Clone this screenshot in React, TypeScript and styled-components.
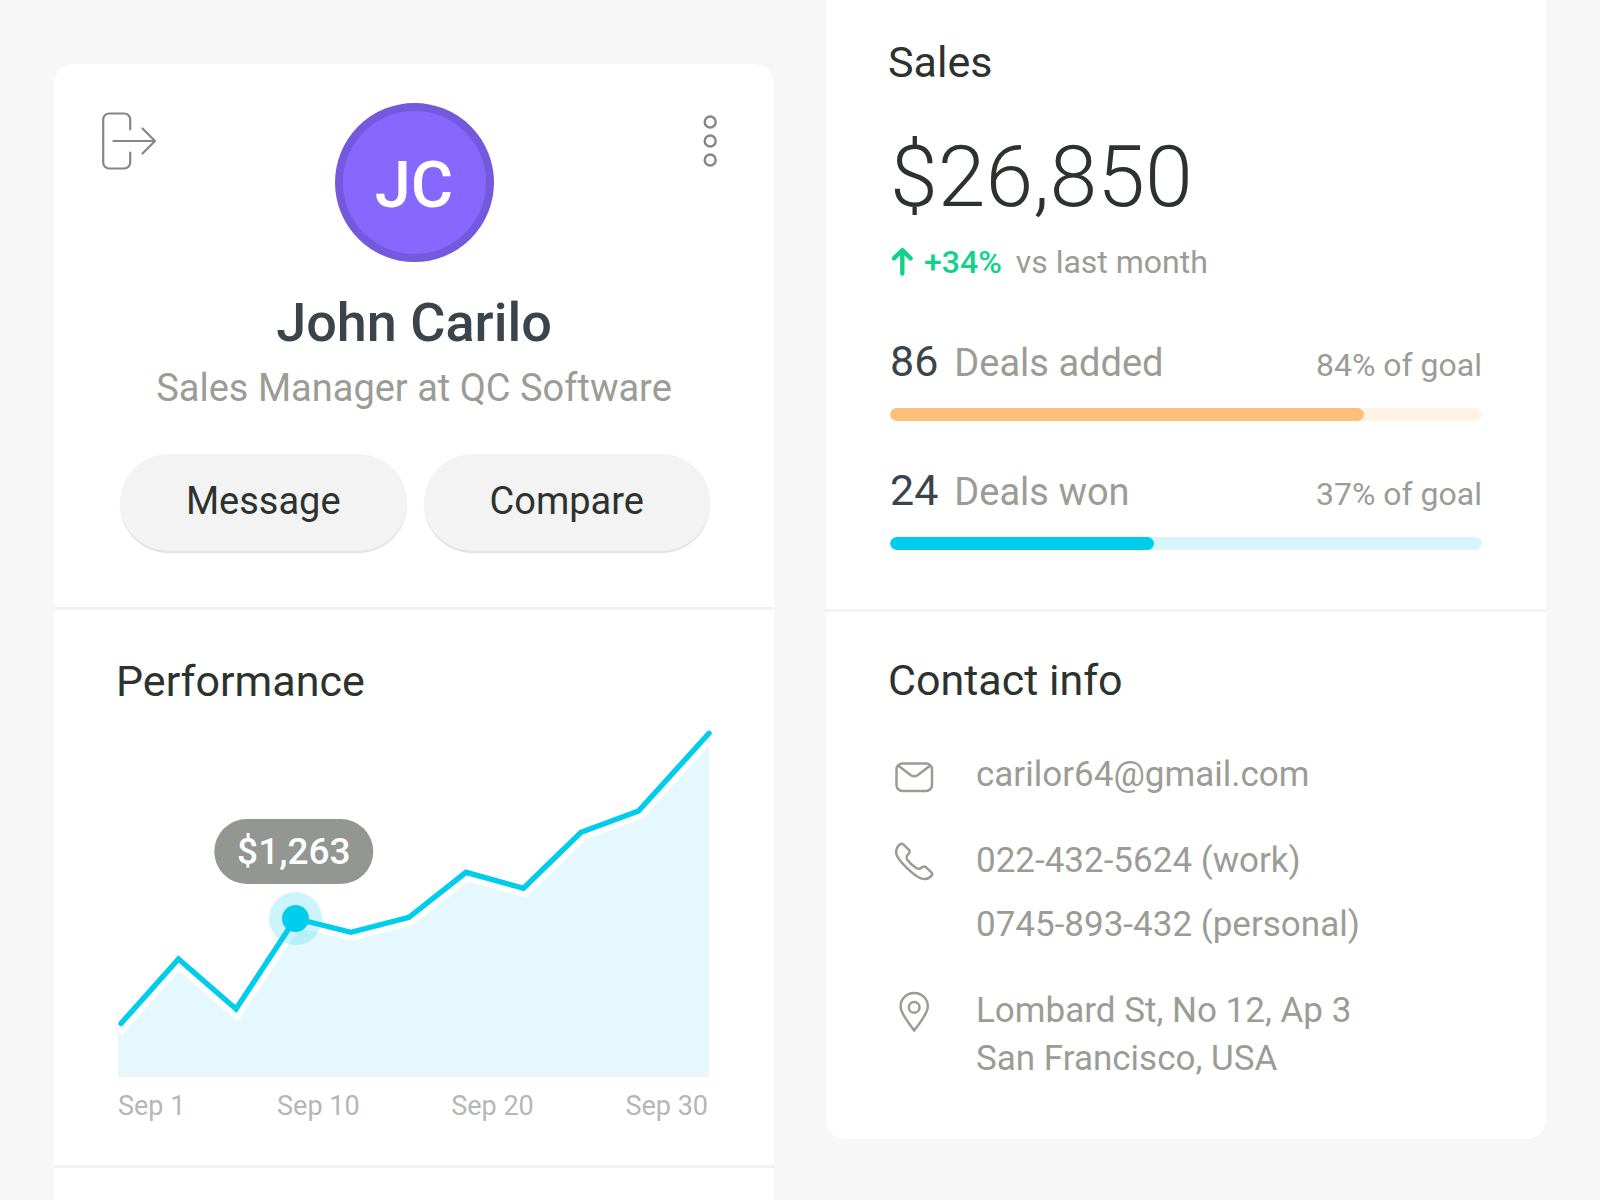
import React from "react";
import styled, { createGlobalStyle } from "styled-components";

const GlobalStyle = createGlobalStyle`
  *, *::before, *::after { box-sizing: border-box; }
  body {
    margin: 0;
    background: #f7f7f7;
    font-family: Roboto, "Liberation Sans", sans-serif;
    color: #2c332e;
  }
  h1, h2, p, ul, address { margin: 0; padding: 0; font-weight: 400; font-style: normal; }
`;

const Page = styled.main`
  display: grid;
  grid-template-columns: 1fr 1fr;
  gap: 52px;
  height: 100vh;
  min-height: 1138px;
  padding: 0 54px;
  overflow: hidden;
`;

const ProfileCard = styled.article`
  margin-top: 64px;
  background: #fff;
  border-radius: 20px 20px 0 0;
`;

const DetailsCard = styled.article`
  align-self: start;
  background: #fff;
  border-radius: 0 0 20px 20px;
`;

const Section = styled.section<{ $top: number; $bottom: number; $last?: boolean }>`
  padding: ${(p) => p.$top}px 62px ${(p) => p.$bottom}px;
  border-bottom: ${(p) => (p.$last ? "none" : "3px solid #f3f3f3")};
`;

const SectionBody = styled.div`
  padding: 0 2px;
`;

const SectionTitle = styled.h2`
  font-size: 43px;
  line-height: 50px;
  color: #2c332e;
`;

const ProfileHeader = styled.header`
  padding: 39px 48px 56px;
  border-bottom: 3px solid #f3f3f3;
`;

const TopRow = styled.div`
  display: flex;
  justify-content: space-between;
  align-items: flex-start;
`;

const IconButton = styled.button`
  display: flex;
  width: 56px;
  height: 76px;
  padding: 0;
  align-items: center;
  border: 0;
  background: none;
  color: #868686;
  cursor: pointer;
`;

const MenuButton = styled(IconButton)`
  justify-content: flex-end;
  margin-right: 8px;
`;

const Avatar = styled.div`
  display: flex;
  align-items: center;
  justify-content: center;
  width: 159px;
  height: 159px;
  margin-left: 8px;
  padding-top: 5px;
  border: 8px solid #7459dc;
  border-radius: 50%;
  background: #8668ff;
  color: #fff;
  font-size: 65px;
  font-weight: 500;
  line-height: 76px;
`;

const Name = styled.h1`
  margin-top: 30px;
  color: #3a444a;
  font-size: 54px;
  font-weight: 500;
  line-height: 62px;
  text-align: center;
`;

const Role = styled.p`
  margin-top: 12px;
  color: #9c9c96;
  font-size: 38px;
  line-height: 44px;
  text-align: center;
`;

const Actions = styled.div`
  display: grid;
  grid-template-columns: 1fr 1fr;
  gap: 17px;
  margin: 44px 16px 0 18px;
`;

const PillButton = styled.button`
  height: 97px;
  padding: 0 0 4px;
  border: 0;
  border-radius: 49px;
  background: #f3f3f3;
  box-shadow: 0 2px 1px #e2e2e2;
  color: #2c332e;
  font-family: inherit;
  font-size: 38px;
  line-height: 44px;
  cursor: pointer;
`;

const Chart = styled.div`
  position: relative;

  svg {
    display: block;
    width: 100%;
    height: auto;
    overflow: visible;
  }
`;

const Tooltip = styled.div`
  position: absolute;
  left: 29.7%;
  top: 113px;
  padding: 11px 23px 10px;
  transform: translateX(-50%);
  border-radius: 33px;
  background: #929792;
  color: #fff;
  font-size: 37px;
  font-weight: 500;
  line-height: 44px;
`;

const Axis = styled.div`
  display: flex;
  justify-content: space-between;
  margin-top: 13px;
  padding-right: 2px;
  color: #b4b7b6;
  font-size: 27px;
  line-height: 32px;
`;

const Amount = styled.p`
  margin-top: 40px;
  font-size: 86px;
  font-weight: 300;
  line-height: 100px;
`;

const Trend = styled.p`
  display: flex;
  align-items: center;
  margin-top: 16px;
  color: #9c9c96;
  font-size: 32px;
  line-height: 38px;

  svg { margin-right: 10px; }
`;

const TrendValue = styled.strong`
  margin-right: 14px;
  color: #12d28a;
  font-weight: 500;
`;

const Goals = styled.div`
  display: grid;
  gap: 44px;
  margin-top: 55px;
`;

const GoalHeader = styled.div`
  display: flex;
  align-items: baseline;
  color: #9c9c96;
  line-height: 38px;
`;

const GoalCount = styled.span`
  margin-right: 16px;
  color: #3a444a;
  font-size: 43px;
  line-height: 50px;
`;

const GoalLabel = styled.span`
  font-size: 38px;
`;

const GoalShare = styled.span`
  margin-left: auto;
  font-size: 32px;
`;

const Track = styled.div<{ $color: string }>`
  height: 13px;
  margin-top: 22px;
  overflow: hidden;
  border-radius: 7px;
  background: ${(p) => p.$color};
`;

const Fill = styled.div<{ $color: string }>`
  height: 100%;
  border-radius: 7px;
  background: ${(p) => p.$color};
`;

const ContactList = styled.ul`
  display: grid;
  gap: 38px;
  margin-top: 46px;
  list-style: none;
`;

const ContactItem = styled.li`
  display: grid;
  grid-template-columns: 48px 1fr;
  column-gap: 38px;
  color: #9c9c96;
  font-size: 35px;
  line-height: 48px;
`;

const ContactLines = styled.div`
  display: grid;
  gap: 16px;
  justify-items: start;
`;

const ContactLink = styled.a`
  color: inherit;
  text-decoration: none;
`;

const ContactIcon = ({ children }: { children: React.ReactNode }) => (
  <svg
    width="48"
    height="48"
    viewBox="0 0 48 48"
    fill="none"
    stroke="currentColor"
    strokeWidth="2.5"
    strokeLinecap="round"
    strokeLinejoin="round"
    aria-hidden="true"
  >
    {children}
  </svg>
);

const goals = [
  { count: 86, label: "Deals added", share: "84% of goal", progress: 80, color: "#ffbd7a", track: "#fff3e8" },
  { count: 24, label: "Deals won", share: "37% of goal", progress: 44.6, color: "#00cceb", track: "#d5f6fb" },
];

const axisLabels = ["Sep 1", "Sep 10", "Sep 20", "Sep 30"];

const chartPoints: [number, number][] = [
  [3, 317.5], [60.5, 253], [118, 303], [177.5, 212.5], [233, 226.3], [291, 211.3],
  [348, 166.3], [405.5, 182.3], [463, 126.3], [520.5, 105], [591, 27.3],
];
const selected = chartPoints[3];
const line = chartPoints.map((p) => p.join(",")).join(" ");

export default function App() {
  return (
    <>
      <GlobalStyle />
      <Page>
        <ProfileCard>
          <ProfileHeader>
            <TopRow>
              <IconButton type="button" aria-label="Log out">
                <svg width="56" height="60" viewBox="0 0 56 60" fill="none" stroke="currentColor" strokeWidth="2.2" strokeLinecap="round" strokeLinejoin="round">
                  <path d="M28.2 18.5V8.5a6 6 0 0 0-6-6H7.2a6 6 0 0 0-6 6v43a6 6 0 0 0 6 6h15a6 6 0 0 0 6-6v-10" />
                  <path d="M11.5 30H53M40.5 17.5L53 30 40.5 42.5" />
                </svg>
              </IconButton>
              <Avatar>JC</Avatar>
              <MenuButton type="button" aria-label="More options">
                <svg width="16" height="54" viewBox="0 0 16 54" fill="none" stroke="currentColor" strokeWidth="2.4">
                  <circle cx="8.2" cy="8" r="5.5" />
                  <circle cx="8.2" cy="27" r="5.5" />
                  <circle cx="8.2" cy="46" r="5.5" />
                </svg>
              </MenuButton>
            </TopRow>
            <Name>John Carilo</Name>
            <Role>Sales Manager at QC Software</Role>
            <Actions>
              <PillButton type="button">Message</PillButton>
              <PillButton type="button">Compare</PillButton>
            </Actions>
          </ProfileHeader>
          <Section $top={46} $bottom={43}>
            <SectionTitle>Performance</SectionTitle>
            <SectionBody>
              <Chart>
                <svg viewBox="0 0 592 371" fill="none" role="img" aria-label="Performance from Sep 1 to Sep 30">
                  <path d={`M0 371V321L${line.replace(/ /g, "L")}V371Z`} fill="#e5f8fd" />
                  <polyline points={line} stroke="#fff" strokeWidth="17" strokeLinecap="square" />
                  <rect y="368" width="591" height="3" fill="#f1f2f2" />
                  <polyline points={line} stroke="#00cceb" strokeWidth="5.4" strokeLinecap="round" />
                  <circle cx={selected[0]} cy={selected[1]} r="26.5" fill="#00cceb" fillOpacity="0.2" />
                  <circle cx={selected[0]} cy={selected[1]} r="13.5" fill="#00cceb" />
                </svg>
                <Tooltip>$1,263</Tooltip>
              </Chart>
              <Axis>
                {axisLabels.map((label) => (
                  <span key={label}>{label}</span>
                ))}
              </Axis>
            </SectionBody>
          </Section>
        </ProfileCard>

        <DetailsCard>
          <Section $top={37} $bottom={59}>
            <SectionTitle>Sales</SectionTitle>
            <SectionBody>
              <Amount>$26,850</Amount>
              <Trend>
                <svg width="24" height="32" viewBox="0 0 24 32" fill="none" stroke="#12d28a" strokeWidth="4.4" strokeLinecap="round" strokeLinejoin="round" aria-hidden="true">
                  <path d="M12.3 27.5V4.2M4 12.4L12.3 4.1l8.3 8.3" />
                </svg>
                <TrendValue>+34%</TrendValue>
                vs last month
              </Trend>
              <Goals>
                {goals.map((g) => (
                  <div key={g.label}>
                    <GoalHeader>
                      <GoalCount>{g.count}</GoalCount>
                      <GoalLabel>{g.label}</GoalLabel>
                      <GoalShare>{g.share}</GoalShare>
                    </GoalHeader>
                    <Track $color={g.track} role="progressbar" aria-label={g.label} aria-valuenow={g.progress} aria-valuemin={0} aria-valuemax={100}>
                      <Fill $color={g.color} style={{ width: `${g.progress}%` }} />
                    </Track>
                  </div>
                ))}
              </Goals>
            </SectionBody>
          </Section>
          <Section $top={43} $bottom={56} $last>
            <SectionTitle>Contact info</SectionTitle>
            <SectionBody>
              <ContactList>
                <ContactItem>
                  <ContactIcon>
                    <rect x="6.5" y="12.4" width="35.5" height="27.6" rx="6" />
                    <path d="M8.5 14.7L20.5 24Q24.2 26.6 27.9 24L40 14.7" />
                  </ContactIcon>
                  <ContactLink href="mailto:carilor64@gmail.com">carilor64@gmail.com</ContactLink>
                </ContactItem>
                <ContactItem>
                  <ContactIcon>
                    <path d="M6.2 16.5C6 13 7 9.6 9.8 7.4Q11.6 6 13.3 7.4L19.2 13.1Q20.3 14.4 19.4 15.8L17.1 18.6Q16 20.4 17.1 22.4C19.4 25.6 23.2 29 26.4 31.2Q28.6 32.4 30.4 31.4L32.8 29.8Q34.6 29 36.2 30.4L41.4 35.4Q43 37 41.4 38.8C39 41.4 35.2 42.8 31 41.4C24.4 39.2 8 24 6.2 16.5Z" />
                  </ContactIcon>
                  <ContactLines>
                    <ContactLink href="tel:0224325624">022-432-5624 (work)</ContactLink>
                    <ContactLink href="tel:0745893432">0745-893-432 (personal)</ContactLink>
                  </ContactLines>
                </ContactItem>
                <ContactItem>
                  <ContactIcon>
                    <path d="M24.2 43.6C21 38.4 10.6 27.6 10.6 19.2a13.6 13.2 0 0 1 27.2 0C37.8 27.6 27.4 38.4 24.2 43.6Z" />
                    <circle cx="24.2" cy="20.4" r="5.3" />
                  </ContactIcon>
                  <address>
                    Lombard St, No 12, Ap 3
                    <br />
                    San Francisco, USA
                  </address>
                </ContactItem>
              </ContactList>
            </SectionBody>
          </Section>
        </DetailsCard>
      </Page>
    </>
  );
}
